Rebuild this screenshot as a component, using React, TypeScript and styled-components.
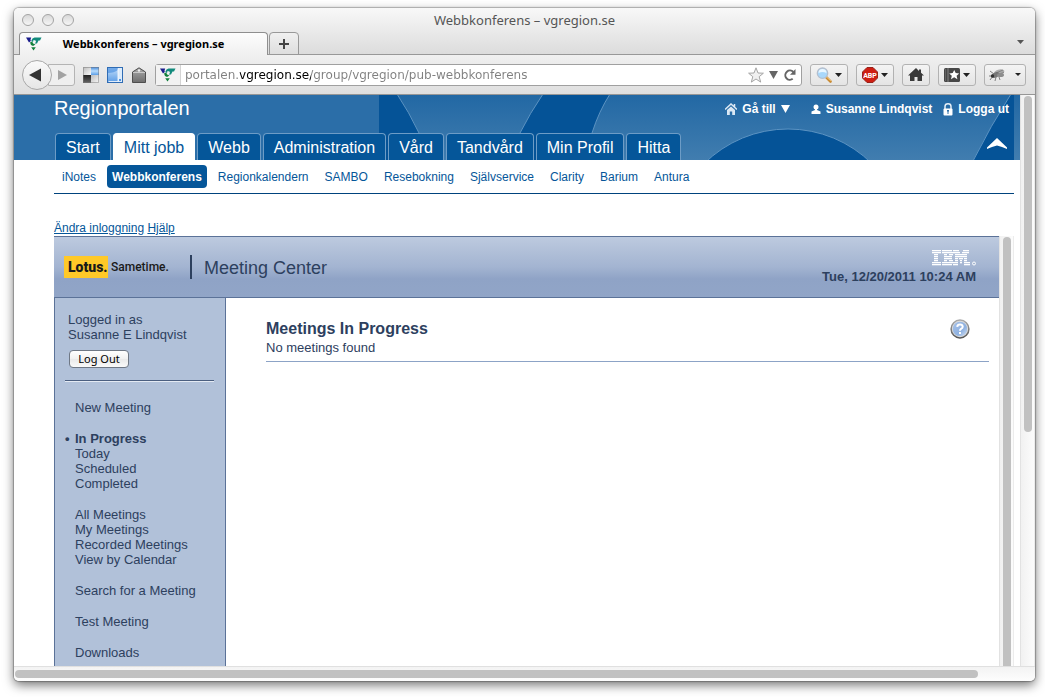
import React from 'react';
import styled, { createGlobalStyle } from 'styled-components';

const ui = '"Noto Sans", "Open Sans", sans-serif';
const uiWide = '"DejaVu Sans", "Noto Sans", sans-serif';
const arial = '"Liberation Sans", Arial, sans-serif';
const brand = 'Roboto, "Liberation Sans", sans-serif';

const GlobalStyle = createGlobalStyle`
  *, *::before, *::after { box-sizing: border-box; }
  body { margin: 0; background: #fff; font-family: ${arial}; }
  button { font: inherit; color: inherit; cursor: pointer; }
  svg { display: block; flex: none; }
`;

/* ---------- Browser window ---------- */

const Desktop = styled.div`
  display: flex;
  height: 100vh;
  overflow: hidden;
  padding: 8px 10px 16px 14px;
`;

const BrowserWindow = styled.div`
  flex: 1;
  min-width: 0;
  display: flex;
  flex-direction: column;
  overflow: hidden;
  border-radius: 5px;
  background: #fff;
  box-shadow: 0 0 1px 1px rgba(0, 0, 0, 0.25), 0 4px 11px rgba(0, 0, 0, 0.55);
`;

const TitleStrip = styled.div`
  background: linear-gradient(#f8f8f8, #dcdcdc);
  border-bottom: 1px solid #989898;
`;

const TitleBar = styled.div`
  display: grid;
  grid-template-columns: 60px 1fr 60px;
  align-items: center;
  height: 24px;
  padding: 0 8px;
`;

const Lights = styled.div`
  display: flex;
  gap: 8px;
`;

const Light = styled.button`
  width: 12px;
  height: 12px;
  padding: 0;
  border: 1px solid #a3a3a3;
  border-radius: 50%;
  background: linear-gradient(#d8d8d8, #f6f6f6);
`;

const WindowTitle = styled.div`
  font: 13px/24px ${ui};
  color: #555;
  text-align: center;
`;

const TabStrip = styled.div`
  display: flex;
  align-items: flex-end;
  gap: 1px;
  padding: 0 9px 0 5px;
  margin-bottom: -1px;
`;

const BrowserTab = styled.button`
  display: grid;
  grid-template-columns: 16px 1fr 16px;
  align-items: center;
  width: 249px;
  height: 23px;
  padding: 0 6px;
  border: 1px solid #8f8f8f;
  border-bottom: 0;
  border-radius: 4px 4px 0 0;
  background: linear-gradient(#fdfdfd, #f0f0f0);
  font: bold 11px/22px ${ui};
  color: #000;
`;

const NewTab = styled.button`
  display: flex;
  align-items: center;
  justify-content: center;
  width: 30px;
  height: 23px;
  padding: 0;
  border: 1px solid #989898;
  border-radius: 4px 4px 0 0;
  background: linear-gradient(#f0f0f0, #dedede);
`;

const TabList = styled.button`
  display: flex;
  align-self: center;
  margin-left: auto;
  padding: 0 2px 4px;
  border: 0;
  background: none;
`;

const Toolbar = styled.div`
  display: flex;
  align-items: center;
  gap: 8px;
  height: 40px;
  padding: 0 9px 0 8px;
  background: linear-gradient(#f0f0f0, #dfdfdf);
  border-bottom: 1px solid #969696;
`;

const BackForward = styled.div`
  display: flex;
  align-items: center;
`;

const Back = styled.button`
  z-index: 1;
  display: flex;
  align-items: center;
  justify-content: center;
  width: 30px;
  height: 30px;
  padding: 0 4px 0 0;
  border: 1px solid #a8a8a8;
  border-radius: 50%;
  background: linear-gradient(#fafafa, #e6e6e6);
`;

const Forward = styled.button`
  display: flex;
  align-items: center;
  justify-content: flex-end;
  width: 27px;
  height: 22px;
  margin-left: -4px;
  padding: 0 7px;
  border: 1px solid #b4b4b4;
  border-radius: 0 3px 3px 0;
  background: #efefef;
`;

const BareButton = styled.button`
  display: flex;
  padding: 0;
  border: 0;
  background: none;
`;

const LocationBar = styled.div`
  flex: 1;
  min-width: 0;
  display: flex;
  align-items: center;
  height: 22px;
  padding-right: 4px;
  border: 1px solid #a0a0a0;
  border-radius: 3px;
  background: #fff;
`;

const Identity = styled.div`
  display: flex;
  align-items: center;
  height: 20px;
  padding: 0 4px;
  border-right: 1px solid #d4d4d4;
  background: #f2f2f2;
`;

const Address = styled.input`
  flex: 1;
  min-width: 0;
  height: 20px;
  padding: 1px 4px 0;
  border: 0;
  outline: 0;
  font: 12px/18px ${uiWide};
  color: #000;
  background: linear-gradient(90deg, #808080 59px, #000 59px, #000 130px, #808080 130px);
  background-clip: text;
  -webkit-background-clip: text;
  -webkit-text-fill-color: transparent;
`;

const LocationTools = styled.div`
  display: flex;
  align-items: center;
  gap: 5px;
`;

const ToolButton = styled.button<{ $split?: boolean }>`
  display: flex;
  align-items: center;
  justify-content: center;
  gap: ${(p) => (p.$split ? '5px' : '3px')};
  width: ${(p) => (p.$split ? '42px' : 'auto')};
  height: 22px;
  padding: 0 5px;
  border: 1px solid #b2b2b2;
  border-radius: 3px;
  background: linear-gradient(#f4f4f4, #e4e4e4);
`;

const SplitLine = styled.span`
  width: 1px;
  height: 16px;
  background: #c8c8c8;
`;

const Viewport = styled.div`
  flex: 1;
  min-height: 0;
  display: flex;
`;

const Page = styled.div`
  flex: 1;
  min-width: 0;
  display: flex;
  flex-direction: column;
  overflow: hidden;
`;

const Track = styled.div`
  flex: none;
  width: 15px;
  padding: 1px 3px 0;
  border-left: 1px solid #e2e2e2;
  border-right: 1px solid #ececec;
  background: linear-gradient(90deg, #f1f1f1, #fcfcfc);
`;

const Thumb = styled.div<{ $size: string; $open?: boolean }>`
  width: 8px;
  height: ${(p) => p.$size};
  border-radius: ${(p) => (p.$open ? '4px 4px 0 0' : '4px')};
  background: #c1c1c1;
`;

const BottomTrack = styled.div`
  display: flex;
  align-items: center;
  height: 15px;
  padding: 0 57px 0 1px;
  border-top: 1px solid #e0e0e0;
  background: linear-gradient(#f3f3f3, #fdfdfd);
`;

const BottomThumb = styled.div`
  flex: 1;
  height: 8px;
  border-radius: 4px;
  background: #c1c1c1;
`;

/* ---------- Portal ---------- */

const PortalHeader = styled.header`
  display: grid;
  flex: none;
  height: 65px;
  overflow: hidden;
  background: #2b6ea8;
`;

const Artwork = styled.div`
  grid-area: 1 / 1;
  justify-self: end;
  padding-right: 6px;
  background: linear-gradient(#2268a4, #417daf);
`;

const HeaderContent = styled.div`
  grid-area: 1 / 1;
  z-index: 1;
  display: flex;
  flex-direction: column;
  justify-content: space-between;
  padding: 0 11px 0 40px;
`;

const HeaderRow = styled.div`
  display: flex;
  justify-content: space-between;
  align-items: flex-start;
`;

const PortalName = styled.h1`
  margin: 0;
  font-size: 20px;
  font-weight: normal;
  line-height: 26px;
  color: #fff;
`;

const UserLinks = styled.nav`
  display: flex;
  align-items: center;
  height: 28px;
`;

const UserLink = styled.a<{ $gap: number }>`
  display: flex;
  align-items: center;
  gap: 5px;
  margin-left: ${(p) => p.$gap}px;
  color: #fff;
  font-size: 12px;
  font-weight: bold;
  text-decoration: none;
  white-space: nowrap;
`;

const TabRow = styled.div`
  display: flex;
  align-items: flex-end;
  justify-content: space-between;
`;

const PortalTabs = styled.nav`
  display: flex;
  gap: 2px;
  padding-left: 1px;
`;

const PortalTab = styled.a<{ $active?: boolean }>`
  height: 27px;
  padding: 0 10px;
  border: 1px solid ${(p) => (p.$active ? '#fff' : '#6d9cc6')};
  border-bottom: 0;
  border-radius: 4px 4px 0 0;
  background: ${(p) => (p.$active ? '#fff' : '#055699')};
  color: ${(p) => (p.$active ? '#055699' : '#fff')};
  font-size: 16px;
  line-height: 27px;
  text-decoration: none;
  white-space: nowrap;
`;

const Collapse = styled(BareButton)`
  padding: 0 2px 11px;
`;

const PortalBody = styled.div`
  flex: 1;
  min-height: 0;
  display: flex;
  flex-direction: column;
  padding: 0 6px 0 40px;
`;

const SubNav = styled.nav`
  display: flex;
  flex: none;
  gap: 6px;
  padding: 5px 3px;
  border-bottom: 1px solid #00437d;
`;

const SubLink = styled.a<{ $active?: boolean }>`
  height: 23px;
  padding: 1px 5px 0;
  border-radius: 4px;
  background: ${(p) => (p.$active ? '#055699' : 'none')};
  color: ${(p) => (p.$active ? '#fff' : '#055699')};
  font-size: 12px;
  font-weight: ${(p) => (p.$active ? 'bold' : 'normal')};
  line-height: 22px;
  text-decoration: none;
`;

const AccountLinks = styled.div`
  flex: none;
  padding-top: 27px;
  font-size: 12px;
  line-height: 15px;

  a { color: #055699; }
`;

/* ---------- Meeting Center ---------- */

const Frame = styled.div`
  flex: 1;
  min-height: 0;
  display: flex;
`;

const MeetingCenter = styled.div`
  flex: 1;
  min-width: 0;
  display: flex;
  flex-direction: column;
  color: #2d405e;
`;

const Banner = styled.div`
  display: flex;
  flex: none;
  align-items: center;
  justify-content: space-between;
  height: 62px;
  padding: 0 23px 0 10px;
  border: 1px solid #5b7298;
  border-left: 0;
  border-right: 0;
  background: linear-gradient(#bdcadf, #a3b4d1 50%, #8fa3c6 70%, #91a5c7);
`;

const Brand = styled.div`
  display: flex;
  align-items: center;
`;

const LotusMark = styled.span`
  width: 44px;
  padding-left: 4px;
  background: #ffc928;
  color: #1a1a1a;
  font: 900 14px/22px ${brand};
`;

const SametimeMark = styled.span`
  width: 82px;
  padding-left: 3px;
  color: #1a1a1a;
  font: 500 12px/22px ${brand};
`;

const ProductName = styled.h2`
  margin: 0;
  font-size: 18px;
  font-weight: normal;
  line-height: 22px;
  padding: 2px 0 0 12px;
  border-left: 2px solid #2d405e;
`;

const BannerSide = styled.div`
  display: flex;
  flex-direction: column;
  align-items: flex-end;
  gap: 2px;
  padding-top: 2px;
`;

const Clock = styled.time`
  font-size: 13px;
  font-weight: bold;
  line-height: 18px;
`;

const Columns = styled.div`
  flex: 1;
  min-height: 0;
  display: flex;
  overflow: hidden;
`;

const Sidebar = styled.aside`
  flex: none;
  width: 172px;
  padding: 14px 11px 0 10px;
  border: 1px solid #5b7298;
  border-top: 0;
  border-bottom: 0;
  background: #b1c1d9;
  font-size: 13px;
`;

const Account = styled.div`
  padding: 0 0 12px 3px;
  border-bottom: 1px solid #4b5f80;
  box-shadow: 0 1px #e4eaf3;
  line-height: 15px;
`;

const LogOut = styled.button`
  display: block;
  width: 60px;
  height: 18px;
  margin: 8px 0 0 1px;
  padding: 0;
  border: 1px solid #6f7885;
  border-radius: 4px;
  background: linear-gradient(#fff, #f1f1f1 50%, #e9e9e9 50%, #fafafa);
  color: #000;
  font: 11px/16px ${ui};
`;

const Menu = styled.nav`
  padding-top: 3px;
`;

const MenuGroup = styled.ul`
  margin: 16px 0 0;
  padding: 0 0 0 10px;
  list-style: none;
  line-height: 15px;
`;

const MenuItem = styled.li<{ $current?: boolean }>`
  font-weight: ${(p) => (p.$current ? 'bold' : 'normal')};

  a { color: inherit; text-decoration: none; }

  &::before {
    content: ${(p) => (p.$current ? '"•"' : 'none')};
    display: inline-block;
    width: 10px;
    margin-left: -10px;
  }
`;

const Main = styled.main`
  flex: 1;
  min-width: 0;
  padding: 21px 10px 0 40px;
`;

const Section = styled.section`
  display: flex;
  justify-content: space-between;
  align-items: flex-start;
  padding: 0 19px 5px 0;
  border-bottom: 1px solid #8ca3c6;
`;

const SectionTitle = styled.h3`
  margin: 0;
  font-size: 16px;
  line-height: 20px;
`;

const SectionNote = styled.p`
  margin: 0;
  font-size: 13px;
  line-height: 17px;
`;

/* ---------- Drawings ---------- */

const RegionLogo = () => (
  <svg width="16" height="16" viewBox="0 0 16 16" aria-hidden="true">
    <path d="M0 1.500h5.200L4.500 3.500 4.800 5 3 6.500z" fill="#1a1c8c" />
    <path d="M6.500 2.500L8.500 1.500H15.500L14 4.500H12.500L11 7.500H8.500L10 6 9.500 4.500 7.500 4 7 6 5.200 5z" fill="#128a7c" />
    <path d="M4 6.500l2-1 1.500 2.300L9.500 8.500 7 10 5 9z" fill="#12803c" />
    <path d="M5.200 11.200h4.600L7.500 14.500z" fill="#12803c" />
  </svg>
);

const Caret = ({ size = 7, color = '#222' }: { size?: number; color?: string }) => (
  <svg width={size} height={size - 3} viewBox="0 0 8 5" preserveAspectRatio="none" aria-hidden="true">
    <path d="M0 0h8L4 5z" fill={color} />
  </svg>
);

const BigCaret = ({ color }: { color: string }) => (
  <svg width="9" height="8" viewBox="0 0 9 8" aria-hidden="true">
    <path d="M0 0h9L4.500 8z" fill={color} />
  </svg>
);

const TilesIcon = () => (
  <svg width="16" height="16" viewBox="0 0 16 16" aria-hidden="true">
    <defs>
      <linearGradient id="tileLight" x1="0" y1="0" x2="1" y2="1"><stop offset="0" stopColor="#bbb" /><stop offset="1" stopColor="#fafafa" /></linearGradient>
      <linearGradient id="tileDark" x1="0" y1="0" x2="0" y2="1"><stop offset="0" stopColor="#222" /><stop offset="1" stopColor="#666" /></linearGradient>
      <linearGradient id="tileBlue" x1="0" y1="0" x2="0" y2="1"><stop offset="0" stopColor="#3f86dc" /><stop offset=".5" stopColor="#b9dcfb" /><stop offset="1" stopColor="#5c9fe8" /></linearGradient>
    </defs>
    <rect width="8" height="8" fill="url(#tileLight)" />
    <rect x="8" width="8" height="8" fill="url(#tileBlue)" />
    <rect y="8" width="8" height="8" fill="url(#tileDark)" />
    <rect x="8" y="8" width="8" height="8" fill="url(#tileLight)" />
    <rect x=".5" y=".5" width="15" height="15" fill="none" stroke="#777" strokeOpacity=".5" />
  </svg>
);

const PanelIcon = () => (
  <svg width="16" height="16" viewBox="0 0 16 16" aria-hidden="true">
    <defs>
      <linearGradient id="panelBlue" x1="0" y1="0" x2="0" y2="1"><stop offset="0" stopColor="#c3defa" /><stop offset="1" stopColor="#5a9ce6" /></linearGradient>
    </defs>
    <rect x=".5" y=".5" width="15" height="15" fill="url(#panelBlue)" stroke="#2f6cb4" />
    <path d="M1 6Q7 6 11 3V1H1z" fill="#4089dd" fillOpacity=".6" />
    <path d="M11 1h4v14h-4z" fill="#dcecfc" />
    <path d="M1.500 14.500h9.500V1.500" fill="none" stroke="#fff" strokeOpacity=".8" />
    <path d="M12 12h2v2h-2z" fill="#4f93e0" />
  </svg>
);

const BoxIcon = () => (
  <svg width="16" height="16" viewBox="0 0 16 16" aria-hidden="true">
    <defs>
      <linearGradient id="boxGrey" x1="0" y1="0" x2="0" y2="1"><stop offset="0" stopColor="#aaa" /><stop offset="1" stopColor="#6e6e6e" /></linearGradient>
    </defs>
    <path d="M1.500 5L8 .8 14.500 5v10.500h-13z" fill="url(#boxGrey)" stroke="#4e4e4e" />
    <path d="M2 5.500h12" stroke="#c9c9c9" />
    <circle cx="8" cy="3.500" r="1.200" fill="#eee" />
  </svg>
);

const SearchIcon = () => (
  <svg width="16" height="16" viewBox="0 0 16 16" aria-hidden="true">
    <path d="M10 10l4.500 4.500" stroke="#c98a32" strokeWidth="2.600" strokeLinecap="round" />
    <path d="M10 9.500l4.800 4.300" stroke="#f3c878" strokeWidth="1" />
    <circle cx="6.500" cy="6.200" r="5.200" fill="#a9d8fb" stroke="#b4bfce" strokeWidth="1.300" />
    <path d="M2.500 6a4 4 0 0 1 8 0Q6.500 4 2.500 6z" fill="#eaf7ff" />
  </svg>
);

const AbpIcon = () => (
  <svg width="16" height="16" viewBox="0 0 16 16" role="img" aria-label="ABP">
    <path d="M5 .5h6L15.500 5v6L11 15.500H5L.5 11V5z" fill="#cf1e12" stroke="#96231b" />
    <text x="8" y="11" textAnchor="middle" fontFamily="Roboto, sans-serif" fontSize="7" fontWeight="bold" fill="#fff">ABP</text>
  </svg>
);

const HomeIcon = () => (
  <svg width="16" height="16" viewBox="0 0 16 16" aria-hidden="true">
    <path d="M8 1L0 8.600h2V14h4.500v-4h3v4H14V8.600h2L13 5.800V2.500h-2v1.400z" fill="#3a3a3a" />
  </svg>
);

const BookmarksIcon = () => (
  <svg width="16" height="16" viewBox="0 0 16 16" aria-hidden="true">
    <rect x="0" y="1" width="16" height="14" rx="1.500" fill="#474747" />
    <path d="M1.500 2.500v11" stroke="#858585" strokeDasharray="1 1" />
    <path d="M4 1v14" stroke="#858585" />
    <path d="M10.200 2.900l1.500 3.200 3.500.3-2.600 2.300.8 3.500-3.200-1.900L7 12.200l.8-3.500-2.600-2.300 3.500-.3z" fill="#fff" />
  </svg>
);

const FlyIcon = () => (
  <svg width="16" height="16" viewBox="0 0 16 16" aria-hidden="true">
    <path d="M1 13l3-4M6 14l1-4M11 13l-1-3M1 4l4 3M3 9H0" stroke="#666" strokeWidth=".8" />
    <ellipse cx="10" cy="5.500" rx="5.500" ry="2.800" transform="rotate(-18 10 5.500)" fill="#aaa" />
    <ellipse cx="6.500" cy="8" rx="4" ry="2.600" transform="rotate(-25 6.500 8)" fill="#777" />
    <circle cx="3.500" cy="9" r="1.700" fill="#333" />
    <path d="M7 6l7-3M8 7.500l7-2" stroke="#666" strokeWidth=".6" />
    <ellipse cx="11.500" cy="8" rx="3.500" ry="2" fill="#8c8c8c" />
  </svg>
);

const StarIcon = () => (
  <svg width="16" height="16" viewBox="0 0 16 16" aria-hidden="true">
    <path d="M8 .8l2 5.200 5.400.2-4.200 3.500 1.500 5.400L8 12l-4.700 3.100 1.500-5.400L.6 6.200 6 6z" fill="#f0f0f0" stroke="#a5a5a5" />
  </svg>
);

const ReloadIcon = () => (
  <svg width="14" height="14" viewBox="0 0 14 14" aria-hidden="true">
    <path d="M9.700 10.800a4.600 4.600 0 1 1 .6-6.800" fill="none" stroke="#666" strokeWidth="2" />
    <path d="M12.500 1v5.800H7z" fill="#666" />
  </svg>
);

const HeaderArt = () => (
  <svg width="635" height="65" viewBox="0 0 635 65" aria-hidden="true">
    <g fill="#055397" stroke="#5c93c2" strokeWidth="1">
      <path d="M-1-1H18Q30 17 40 38L52 66H-1z" />
      <path d="M164-1Q151 18 141 38L129 66H203L213 38Q220 16 231-1z" />
      <circle cx="409" cy="153" r="119" />
      <path d="M632-1Q612 30 594 66H640V-1z" />
    </g>
  </svg>
);

const HouseIcon = () => (
  <svg width="12" height="12" viewBox="0 0 12 12" aria-hidden="true">
    <path d="M0 6.500L6 1l6 5.500M9.500 1v3" fill="none" stroke="#dbe8f4" strokeWidth="1.500" />
    <path d="M2 7l4-3.600L10 7v5H7.200V8.500H4.800V12H2z" fill="#dbe8f4" />
  </svg>
);

const PersonIcon = () => (
  <svg width="10" height="10" viewBox="0 0 10 10" aria-hidden="true">
    <circle cx="5" cy="3" r="2.500" fill="#fff" />
    <path d="M4 5h2v1l3.500 1.500V10H.5V7.500L4 6z" fill="#fff" />
  </svg>
);

const LockIcon = () => (
  <svg width="10" height="13" viewBox="0 0 10 13" aria-hidden="true">
    <path d="M2 6V3.500a3 2.700 0 0 1 6 0V6" fill="none" stroke="#e6eff7" strokeWidth="1.500" />
    <rect x=".5" y="5.500" width="9" height="7" rx="1" fill="#fff" />
    <path d="M4 7h2v1.500H5.500V11h-1V8.500H4z" fill="#2f70a8" />
  </svg>
);

const ChevronUp = () => (
  <svg width="20" height="11" viewBox="0 0 20 11" aria-hidden="true">
    <path d="M10 0l10 9.500V11Q15 8.500 10 7.500 5 8.500 0 11V9.500z" fill="#fff" />
  </svg>
);

const IBM_ROWS: Array<Array<[number, number]>> = [
  [[0, 9], [10, 10], [21, 6], [31, 6]],
  [[0, 9], [10, 11], [21, 7], [30, 7]],
  [[2, 4], [12, 3], [17, 4], [23, 6], [29, 6]],
  [[2, 4], [12, 8], [23, 12]],
  [[2, 4], [12, 8], [23, 3], [27, 4], [32, 3]],
  [[2, 4], [12, 3], [17, 4], [23, 3], [28, 2], [32, 3]],
  [[0, 9], [10, 11], [21, 5], [28, 2], [32, 6]],
  [[0, 9], [10, 10], [21, 5], [32, 6]],
];

const IbmLogo = () => (
  <svg width="44" height="16" viewBox="0 0 44 16" role="img" aria-label="IBM">
    {IBM_ROWS.map((row, y) =>
      row.map(([x, w]) => <rect key={`${x}-${y}`} x={x} y={y * 2} width={w} height="1.300" fill="#fff" />),
    )}
    <circle cx="42" cy="13.500" r="1.500" fill="none" stroke="#fff" />
  </svg>
);

const HelpIcon = () => (
  <svg width="20" height="20" viewBox="0 0 20 20" aria-hidden="true">
    <defs>
      <linearGradient id="helpRim" x1="0" y1="0" x2="0" y2="1"><stop offset="0" stopColor="#aaa" /><stop offset="1" stopColor="#555" /></linearGradient>
      <linearGradient id="helpFill" x1="0" y1="0" x2="1" y2="1"><stop offset="0" stopColor="#a9c4ea" /><stop offset=".6" stopColor="#8fb1e0" /><stop offset="1" stopColor="#dbe8f8" /></linearGradient>
    </defs>
    <circle cx="10" cy="10" r="8" fill="url(#helpFill)" stroke="#dcdcdc" strokeWidth="1.500" />
    <circle cx="10" cy="10" r="8.900" fill="none" stroke="url(#helpRim)" strokeWidth="1.500" />
    <path d="M7.200 7.800Q7.500 5.500 10 5.500t2.700 2.200Q12.700 9 11 9.800q-1 .6-1 2" fill="none" stroke="#fff" strokeWidth="2" />
    <rect x="9" y="13" width="2" height="2" fill="#fff" />
  </svg>
);

/* ---------- Content ---------- */

const portalTabs = ['Start', 'Mitt jobb', 'Webb', 'Administration', 'Vård', 'Tandvård', 'Min Profil', 'Hitta'];
const subLinks = ['iNotes', 'Webbkonferens', 'Regionkalendern', 'SAMBO', 'Resebokning', 'Självservice', 'Clarity', 'Barium', 'Antura'];
const menu = [
  ['New Meeting'],
  ['In Progress', 'Today', 'Scheduled', 'Completed'],
  ['All Meetings', 'My Meetings', 'Recorded Meetings', 'View by Calendar'],
  ['Search for a Meeting'],
  ['Test Meeting'],
  ['Downloads'],
];

export default function App() {
  return (
    <Desktop>
      <GlobalStyle />
      <BrowserWindow>
        <TitleStrip>
          <TitleBar>
            <Lights>
              <Light aria-label="Close" />
              <Light aria-label="Minimize" />
              <Light aria-label="Zoom" />
            </Lights>
            <WindowTitle>Webbkonferens – vgregion.se</WindowTitle>
          </TitleBar>
          <TabStrip>
            <BrowserTab>
              <RegionLogo />
              <span>Webbkonferens – vgregion.se</span>
            </BrowserTab>
            <NewTab aria-label="New tab">
              <svg width="10" height="10" viewBox="0 0 10 10" aria-hidden="true">
                <path d="M5 0v10M0 5h10" stroke="#444" strokeWidth="2" />
              </svg>
            </NewTab>
            <TabList aria-label="List all tabs"><Caret color="#555" /></TabList>
          </TabStrip>
        </TitleStrip>

        <Toolbar>
          <BackForward>
            <Back aria-label="Back">
              <svg width="12" height="14" viewBox="0 0 12 14" aria-hidden="true"><path d="M12 .5v13L0 7z" fill="#333" /></svg>
            </Back>
            <Forward aria-label="Forward">
              <svg width="9" height="10" viewBox="0 0 9 10" aria-hidden="true"><path d="M0 0v10l9-5z" fill="#a2a2a2" /></svg>
            </Forward>
          </BackForward>
          <BareButton aria-label="Tiles"><TilesIcon /></BareButton>
          <BareButton aria-label="Panel"><PanelIcon /></BareButton>
          <BareButton aria-label="Tag"><BoxIcon /></BareButton>
          <LocationBar>
            <Identity><RegionLogo /></Identity>
            <Address aria-label="Address" defaultValue="portalen.vgregion.se/group/vgregion/pub-webbkonferens" />
            <LocationTools>
              <BareButton aria-label="Bookmark"><StarIcon /></BareButton>
              <BareButton aria-label="History"><BigCaret color="#666" /></BareButton>
              <BareButton aria-label="Reload"><ReloadIcon /></BareButton>
            </LocationTools>
          </LocationBar>
          <ToolButton aria-label="Search"><SearchIcon /><Caret /></ToolButton>
          <ToolButton aria-label="Adblock Plus"><AbpIcon /><Caret /></ToolButton>
          <ToolButton aria-label="Home"><HomeIcon /></ToolButton>
          <ToolButton aria-label="Bookmarks"><BookmarksIcon /><Caret /></ToolButton>
          <ToolButton aria-label="Inspect" $split><FlyIcon /><SplitLine /><Caret size={6} /></ToolButton>
        </Toolbar>

        <Viewport>
          <Page>
            <PortalHeader>
              <Artwork><HeaderArt /></Artwork>
              <HeaderContent>
                <HeaderRow>
                  <PortalName>Regionportalen</PortalName>
                  <UserLinks>
                    <UserLink href="#" $gap={0}><HouseIcon />Gå till<BigCaret color="#fff" /></UserLink>
                    <UserLink href="#" $gap={21}><PersonIcon />Susanne Lindqvist</UserLink>
                    <UserLink href="#" $gap={11}><LockIcon />Logga ut</UserLink>
                  </UserLinks>
                </HeaderRow>
                <TabRow>
                  <PortalTabs>
                    {portalTabs.map((t) => (
                      <PortalTab key={t} href="#" $active={t === 'Mitt jobb'}>{t}</PortalTab>
                    ))}
                  </PortalTabs>
                  <Collapse aria-label="Collapse"><ChevronUp /></Collapse>
                </TabRow>
              </HeaderContent>
            </PortalHeader>

            <PortalBody>
              <SubNav>
                {subLinks.map((t) => (
                  <SubLink key={t} href="#" $active={t === 'Webbkonferens'}>{t}</SubLink>
                ))}
              </SubNav>
              <AccountLinks>
                <a href="#">Ändra inloggning</a> <a href="#">Hjälp</a>
              </AccountLinks>

              <Frame>
                <MeetingCenter>
                  <Banner>
                    <Brand>
                      <LotusMark>Lotus.</LotusMark>
                      <SametimeMark>Sametime.</SametimeMark>
                      <ProductName>Meeting Center</ProductName>
                    </Brand>
                    <BannerSide>
                      <IbmLogo />
                      <Clock dateTime="2011-12-20T10:24">Tue, 12/20/2011 10:24 AM</Clock>
                    </BannerSide>
                  </Banner>
                  <Columns>
                    <Sidebar>
                      <Account>
                        <div>Logged in as</div>
                        <div>Susanne E Lindqvist</div>
                        <LogOut>Log Out</LogOut>
                      </Account>
                      <Menu>
                        {menu.map((group) => (
                          <MenuGroup key={group[0]}>
                            {group.map((item) => (
                              <MenuItem key={item} $current={item === 'In Progress'}>
                                <a href="#">{item}</a>
                              </MenuItem>
                            ))}
                          </MenuGroup>
                        ))}
                      </Menu>
                    </Sidebar>
                    <Main>
                      <Section>
                        <div>
                          <SectionTitle>Meetings In Progress</SectionTitle>
                          <SectionNote>No meetings found</SectionNote>
                        </div>
                        <BareButton aria-label="Help"><HelpIcon /></BareButton>
                      </Section>
                    </Main>
                  </Columns>
                </MeetingCenter>
                <Track><Thumb $size="100%" $open /></Track>
              </Frame>
            </PortalBody>
          </Page>
          <Track><Thumb $size="59%" /></Track>
        </Viewport>
        <BottomTrack><BottomThumb /></BottomTrack>
      </BrowserWindow>
    </Desktop>
  );
}
